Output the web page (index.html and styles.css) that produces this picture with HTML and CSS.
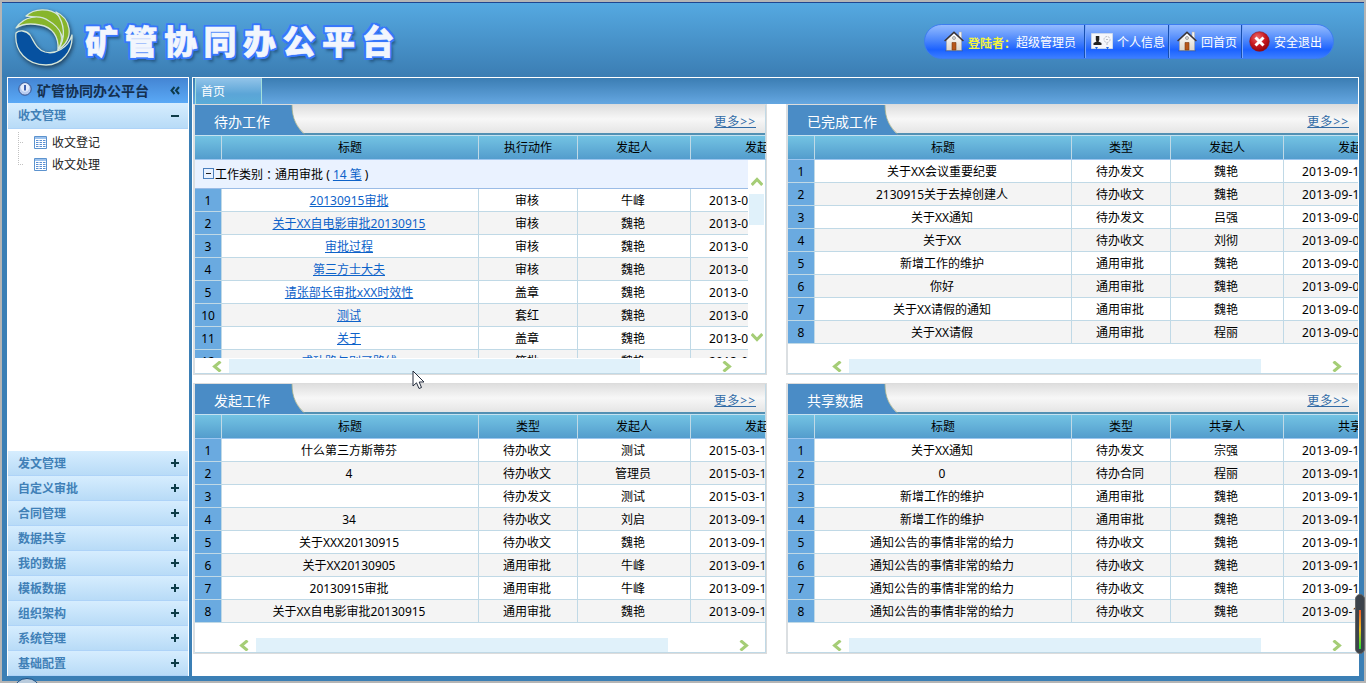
FILE: index.html
```
<!DOCTYPE html>
<html lang="zh-CN">
<head>
<meta charset="utf-8">
<title>矿管协同办公平台</title>
<link rel="stylesheet" href="styles.css">
</head>
<body>
<svg class="defs" width="0" height="0">
  <defs>
    <linearGradient id="wall" x1="0" y1="0" x2="0" y2="1"><stop offset="0" stop-color="#fff"/><stop offset="1" stop-color="#ddd5c8"/></linearGradient>
    <radialGradient id="red" cx=".4" cy=".3" r=".8"><stop offset="0" stop-color="#ee6a6a"/><stop offset=".5" stop-color="#c81820"/><stop offset="1" stop-color="#850008"/></radialGradient>
    <linearGradient id="tabfill" x1="0" y1="0" x2="0" y2="1"><stop offset="0" stop-color="#4a8cc6"/><stop offset="1" stop-color="#4a8cc6"/></linearGradient>
    <symbol id="house" viewBox="0 0 20 21">
      <path d="M15 1h2.500v7H15z" fill="#f6f4ee" stroke="#b5aea2" stroke-width=".5"/>
      <path d="M2.500 9 10 2.200 17.500 9v10.500h-15z" fill="url(#wall)" stroke="#aaa294" stroke-width=".5"/>
      <path d="M.6 10 10 1.200 19.400 10" fill="none" stroke="#3c3434" stroke-width="1.500"/>
      <circle cx="10" cy="7" r="1.500" fill="#ddd" stroke="#8b8b8b" stroke-width=".7"/>
      <path d="M8 11.500h4v7.500H8z" fill="#b85618" stroke="#7a3b12" stroke-width=".6"/>
      <path d="M1 19.800h18" stroke="#44506a" stroke-width=".8" opacity=".6"/>
    </symbol>
    <symbol id="more-l" viewBox="0 0 10 11"><path d="M8.500.5 2.500 5.500l6 5" fill="none" stroke="#a5cd76" stroke-width="3"/></symbol>
    <symbol id="more-r" viewBox="0 0 10 11"><path d="M1.500.5l6 5-6 5" fill="none" stroke="#a5cd76" stroke-width="3"/></symbol>
    <symbol id="sheet" viewBox="0 0 13 13">
      <path d="M.5.5h12v12H.5z" fill="#fff" stroke="#5d93ce"/><path d="M1 1h11v2H1z" fill="#9dc3ee"/>
      <path d="M2 4.500h2.500M5.500 4.500H8M9 4.500h2.500M2 6.500h2.500M5.500 6.500H8M9 6.500h2.500M2 8.500h2.500M5.500 8.500H8M9 8.500h2.500M2 10.500h2.500M5.500 10.500H8M9 10.500h2.500" stroke="#5a8fd2"/>
    </symbol>
    <symbol id="curve" viewBox="0 0 112 30">
      <path d="M0 0h97c0 14 5 23 13 30H0z" fill="url(#tabfill)"/>
      <path d="M97 0c0 14 5 22 12.500 29" fill="none" stroke="#a9b48c" stroke-width=".8"/>
    </symbol>
  </defs>
</svg>
<div class="window">
  <header class="top">
    <svg class="logo" width="64" height="62" viewBox="0 0 64 62">
      <g class="mark" stroke="#d5e6da" stroke-width="1.300" stroke-linejoin="round">
        <path d="M4 25C7 22 14 22 18 27c4 6 6 14 15 17 10 3 23-4 27-17 1 16-10 30-26 30C15 57 2 43 4 25z" fill="#0651a0"/>
        <path d="M14 8C22 0 38 0 46 7c6 6 9 15 6 25C47 20 38 10 14 8z" fill="#87b52b"/>
        <path d="M4 20C12 8 27 6 37 13c12 7 16 17 9 29C47 28 40 19 28 17 18 15 10 16 4 20z" fill="#87b52b"/>
        <path d="M44 4c14 6 20 26 2 38 8-12 7-26-2-38z" fill="#87b52b"/>
      </g>
    </svg>
    <h1 class="brand">矿管协同办公平台</h1>
    <nav class="pill">
      <a class="pill-item user"><svg width="20" height="21"><use href="#house"/></svg><b>登陆者<span class="colon">：</span></b><span>超级管理员</span></a>
      <a class="pill-item info"><svg width="22" height="18" viewBox="0 0 22 18"><path d="M.5.500h21v15H.5z" fill="#f5f7fb" stroke="#cbd8ee"/><path d="M4.800 3h3.500v4l-.8 1.500 3 1.500v2H2.500v-2l3-1.500-.7-1.500z" fill="#222"/><circle cx="16" cy="6.500" r="3" fill="none" stroke="#b7bcc4" stroke-dasharray="2 1"/><path d="M15 6.500h2M16 10v2" stroke="#b7bcc4"/><path d="M4 14h3l-1.500 2.500zM15 14h3l-1.500 2.500z" fill="#2468e0"/></svg><span>个人信息</span></a>
      <a class="pill-item home"><svg width="20" height="21"><use href="#house"/></svg><span>回首页</span></a>
      <a class="pill-item quit"><svg width="21" height="21" viewBox="0 0 21 21"><circle cx="10.500" cy="10.500" r="9.800" fill="url(#red)" stroke="#8a1420" stroke-width=".6"/><path d="M6.500 6.500l8 8M14.500 6.500l-8 8" stroke="#fff" stroke-width="3"/></svg><span>安全退出</span></a>
    </nav>
  </header>
  <div class="main">
    <aside class="side">
      <div class="side-title"><svg width="14" height="14" viewBox="0 0 14 14"><circle cx="7" cy="7" r="6.200" fill="#b9cdf0" stroke="#33508c"/><circle cx="7" cy="5.500" r="4.200" fill="#e4ecfb"/><path d="M7 3v5.500" stroke="#3f62b0" stroke-width="2"/></svg><b>矿管协同办公平台</b><svg class="fold" width="10" height="9" viewBox="0 0 10 9"><path d="M4.500 1 1.500 4.500l3 3.500M9 1 6 4.500 9 8" fill="none" stroke="#0d3a4a" stroke-width="2"/></svg></div>
      <div class="acc open"><b>收文管理</b><i class="sign minus"></i></div>
      <div class="tree">
        <div class="leaf"><svg width="13" height="13"><use href="#sheet"/></svg>收文登记</div>
        <div class="leaf last"><svg width="13" height="13"><use href="#sheet"/></svg>收文处理</div>
      </div>
      <div class="acc"><b>发文管理</b><i class="sign"></i></div>
      <div class="acc"><b>自定义审批</b><i class="sign"></i></div>
      <div class="acc"><b>合同管理</b><i class="sign"></i></div>
      <div class="acc"><b>数据共享</b><i class="sign"></i></div>
      <div class="acc"><b>我的数据</b><i class="sign"></i></div>
      <div class="acc"><b>模板数据</b><i class="sign"></i></div>
      <div class="acc"><b>组织架构</b><i class="sign"></i></div>
      <div class="acc"><b>系统管理</b><i class="sign"></i></div>
      <div class="acc"><b>基础配置</b><i class="sign"></i></div>
    </aside>
    <section class="content">
      <div class="tabs"><div class="tab">首页</div></div>
      <div class="panels">
        <div class="panel">
          <div class="phead"><svg class="curve" width="112" height="30"><use href="#curve"/></svg><span class="ptitle">待办工作</span><a class="more">更多&gt;&gt;</a></div>
          <div class="row thead"><i></i><i>标题</i><i>执行动作</i><i>发起人</i><i>发起</i></div>
          <div class="pbody">
            <div class="rows">
              <div class="group"><span class="box"></span>工作类别<span class="colon">：</span>通用审批 ( <a>14 笔</a> )</div>
              <div class="row"><i>1</i><i><a>20130915审批</a></i><i>审核</i><i>牛峰</i><i>2013-0</i></div>
              <div class="row"><i>2</i><i><a>关于XX自电影审批20130915</a></i><i>审核</i><i>魏艳</i><i>2013-0</i></div>
              <div class="row"><i>3</i><i><a>审批过程</a></i><i>审核</i><i>魏艳</i><i>2013-0</i></div>
              <div class="row"><i>4</i><i><a>第三方士大夫</a></i><i>审核</i><i>魏艳</i><i>2013-0</i></div>
              <div class="row"><i>5</i><i><a>请张部长审批xXX时效性</a></i><i>盖章</i><i>魏艳</i><i>2013-0</i></div>
              <div class="row"><i>10</i><i><a>测试</a></i><i>套红</i><i>魏艳</i><i>2013-0</i></div>
              <div class="row"><i>11</i><i><a>关于</a></i><i>盖章</i><i>魏艳</i><i>2013-0</i></div>
              <div class="row"><i>12</i><i><a>成功路与别了路线</a></i><i>签批</i><i>魏艳</i><i>2013-0</i></div>
            </div>
            <div class="vbar">
              <svg width="12" height="9" viewBox="0 0 12 9"><path d="M.7 8 6 2.500 11.300 8" fill="none" stroke="#a5cd76" stroke-width="3"/></svg>
              <div class="vthumb"></div>
              <svg class="down" width="12" height="9" viewBox="0 0 12 9"><path d="M.7 1 6 6.500 11.300 1" fill="none" stroke="#a5cd76" stroke-width="3"/></svg>
            </div>
          </div>
          <div class="hbar near"><svg width="10" height="11"><use href="#more-l"/></svg><div class="thumb"></div><svg class="r" width="10" height="11"><use href="#more-r"/></svg></div>
        </div>
        <div class="panel">
          <div class="phead"><svg class="curve" width="112" height="30"><use href="#curve"/></svg><span class="ptitle">已完成工作</span><a class="more">更多&gt;&gt;</a></div>
          <div class="row thead"><i></i><i>标题</i><i>类型</i><i>发起人</i><i>发起</i></div>
          <div class="pbody"><div class="rows">
            <div class="row"><i>1</i><i>关于XX会议重要纪要</i><i>待办发文</i><i>魏艳</i><i>2013-09-1</i></div>
            <div class="row"><i>2</i><i>2130915关于去掉创建人</i><i>待办收文</i><i>魏艳</i><i>2013-09-1</i></div>
            <div class="row"><i>3</i><i>关于XX通知</i><i>待办发文</i><i>吕强</i><i>2013-09-0</i></div>
            <div class="row"><i>4</i><i>关于XX</i><i>待办收文</i><i>刘彻</i><i>2013-09-0</i></div>
            <div class="row"><i>5</i><i>新增工作的维护</i><i>通用审批</i><i>魏艳</i><i>2013-09-0</i></div>
            <div class="row"><i>6</i><i>你好</i><i>通用审批</i><i>魏艳</i><i>2013-09-0</i></div>
            <div class="row"><i>7</i><i>关于XX请假的通知</i><i>通用审批</i><i>魏艳</i><i>2013-09-0</i></div>
            <div class="row"><i>8</i><i>关于XX请假</i><i>通用审批</i><i>程丽</i><i>2013-09-0</i></div>
          </div></div>
          <div class="hbar wide"><svg width="10" height="11"><use href="#more-l"/></svg><div class="thumb"></div><svg class="r" width="10" height="11"><use href="#more-r"/></svg></div>
        </div>
        <div class="panel">
          <div class="phead"><svg class="curve" width="112" height="30"><use href="#curve"/></svg><span class="ptitle">发起工作</span><a class="more">更多&gt;&gt;</a></div>
          <div class="row thead"><i></i><i>标题</i><i>类型</i><i>发起人</i><i>发起</i></div>
          <div class="pbody"><div class="rows">
            <div class="row"><i>1</i><i>什么第三方斯蒂芬</i><i>待办收文</i><i>测试</i><i>2015-03-1</i></div>
            <div class="row"><i>2</i><i>4</i><i>待办收文</i><i>管理员</i><i>2015-03-1</i></div>
            <div class="row"><i>3</i><i></i><i>待办发文</i><i>测试</i><i>2015-03-1</i></div>
            <div class="row"><i>4</i><i>34</i><i>待办收文</i><i>刘启</i><i>2013-09-1</i></div>
            <div class="row"><i>5</i><i>关于XXX20130915</i><i>待办收文</i><i>魏艳</i><i>2013-09-1</i></div>
            <div class="row"><i>6</i><i>关于XX20130905</i><i>通用审批</i><i>牛峰</i><i>2013-09-1</i></div>
            <div class="row"><i>7</i><i>20130915审批</i><i>通用审批</i><i>牛峰</i><i>2013-09-1</i></div>
            <div class="row"><i>8</i><i>关于XX自电影审批20130915</i><i>通用审批</i><i>魏艳</i><i>2013-09-1</i></div>
          </div></div>
          <div class="hbar wide"><svg width="10" height="11"><use href="#more-l"/></svg><div class="thumb"></div><svg class="r" width="10" height="11"><use href="#more-r"/></svg></div>
        </div>
        <div class="panel">
          <div class="phead"><svg class="curve" width="112" height="30"><use href="#curve"/></svg><span class="ptitle">共享数据</span><a class="more">更多&gt;&gt;</a></div>
          <div class="row thead"><i></i><i>标题</i><i>类型</i><i>共享人</i><i>共享</i></div>
          <div class="pbody"><div class="rows">
            <div class="row"><i>1</i><i>关于XX通知</i><i>待办发文</i><i>宗强</i><i>2013-09-1</i></div>
            <div class="row"><i>2</i><i>0</i><i>待办合同</i><i>程丽</i><i>2013-09-1</i></div>
            <div class="row"><i>3</i><i>新增工作的维护</i><i>通用审批</i><i>魏艳</i><i>2013-09-1</i></div>
            <div class="row"><i>4</i><i>新增工作的维护</i><i>通用审批</i><i>魏艳</i><i>2013-09-1</i></div>
            <div class="row"><i>5</i><i>通知公告的事情非常的给力</i><i>待办收文</i><i>魏艳</i><i>2013-09-1</i></div>
            <div class="row"><i>6</i><i>通知公告的事情非常的给力</i><i>待办收文</i><i>魏艳</i><i>2013-09-1</i></div>
            <div class="row"><i>7</i><i>通知公告的事情非常的给力</i><i>待办收文</i><i>魏艳</i><i>2013-09-1</i></div>
            <div class="row"><i>8</i><i>通知公告的事情非常的给力</i><i>待办收文</i><i>魏艳</i><i>2013-09-1</i></div>
          </div></div>
          <div class="hbar wide"><svg width="10" height="11"><use href="#more-l"/></svg><div class="thumb"></div><svg class="r" width="10" height="11"><use href="#more-r"/></svg></div>
        </div>
      </div>
    </section>
  </div>
</div>
<svg class="cursor" width="13" height="20" viewBox="0 0 13 20"><path d="M1 1v15l3.500-3.200L7 18.500l2.500-1L7.200 12H12z" fill="#fff" stroke="#222b3c"/></svg>
<svg class="orb" width="26" height="5" viewBox="0 0 26 5"><ellipse cx="13" cy="11" rx="12.500" ry="10.500" fill="#b9cbdc" stroke="#1b4d80"/></svg>
<div class="meter"><i></i></div>
</body>
</html>
```
FILE: styles.css
```
* { box-sizing: border-box; }
body {
  margin: 0;
  width: 1366px;
  height: 683px;
  overflow: hidden;
  position: relative;
  font: 12px/22px "Noto Sans", "Noto Sans CJK SC", sans-serif;
  color: #000;
  background: #b5b5b5;
}
i { font-style: normal; }
svg { display: block; flex: none; }
.defs { position: absolute; }
.colon { font-family: "Noto Sans CJK TC", sans-serif; }
.window {
  height: 683px;
  border: 2px solid #b5b5b5;
  background: #3b7fb5;
  display: flex;
  flex-direction: column;
}
.top {
  height: 75px;
  border-top: 1px solid #1f4690;
  background: linear-gradient(#55a9e1, #3b7db3);
  display: flex;
  align-items: flex-start;
  padding: 4px 30px 0 10px;
}
.logo { margin-top: 1px; overflow: visible; }
.mark { filter: drop-shadow(1px 2px 2px #1d3f5d); }
.brand {
  margin: 12px 0 0 9px;
  font: 900 33px/42px "Noto Sans CJK SC", sans-serif;
  letter-spacing: 6.500px;
  color: #f2f6fd;
  -webkit-text-stroke: .6px #f2f6fd;
  text-shadow: 2px 0 #3777fb, -2px 0 #3777fb, 0 2px #3777fb, 0 -2px #3777fb, 2px 2px #3777fb, -2px 2px #3777fb, 2px -2px #3777fb, -2px -2px #3777fb, 3px 4px 3px #245783;
  white-space: nowrap;
}
.pill {
  margin: 17px 0 0 auto;
  width: 410px;
  height: 35px;
  border-radius: 18px;
  border: 1px solid #3d7df0;
  background: linear-gradient(#94bbff, #4e88fb 45%, #1c62ff 75%, #3b7eff);
  display: flex;
  color: #fff;
  overflow: hidden;
}
.pill-item {
  display: flex;
  align-items: center;
  border-right: 1px solid #174fae;
  border-left: 1px solid #76a5ff;
  white-space: nowrap;
}
.pill-item b { color: #f4f43c; padding-top: 3px; }
.pill-item > span { padding-top: 3px; }
.user { width: 160px; padding-left: 19px; border-left: 0; }
.user svg, .home svg { margin-right: 4px; }
.info { width: 84px; padding-left: 5px; }
.info svg { margin-right: 4px; }
.home { width: 73px; padding-left: 7px; }
.quit { flex: 1; padding-left: 6px; border-right: 0; }
.quit svg { margin-right: 4px; }

.main { height: 599px; margin: 0 5px; display: flex; gap: 3px; }
.side {
  width: 182px;
  border: 1px solid #fff;
  border-bottom-width: 0;
  background: #fff;
  display: flex;
  flex-direction: column;
}
.side-title {
  height: 25px;
  background: linear-gradient(#4485d3, #5aa9f6);
  display: flex;
  align-items: center;
  padding: 0 8px 1px 10px;
  font-size: 14px;
  color: #15304f;
}
.side-title > svg:first-child { margin: 0 5px 3px 0; }
.side-title b { font-weight: 600; padding-top: 1px; }
.side-title .fold { margin-left: auto; }
.acc {
  height: 25px;
  border-bottom: 1px solid #aed3f8;
  background: linear-gradient(#d6edfe, #b8dbf7);
  display: flex;
  align-items: center;
  justify-content: space-between;
  padding: 0 9px 0 10px;
  color: #4080b7;
}
.acc b { padding-top: 2px; }
.acc.open { height: 26px; }
.acc.open b { padding-top: 1px; }
.sign {
  width: 8px;
  height: 8px;
  background: linear-gradient(#0e3c48, #0e3c48) 0 3px / 8px 2px no-repeat, linear-gradient(#0e3c48, #0e3c48) 3px 0 / 2px 8px no-repeat;
}
.sign.minus { background: linear-gradient(#0e3c48, #0e3c48) 0 3px / 8px 2px no-repeat; }
.tree { flex: 1; padding: 3px 0 0 10px; }
.leaf {
  height: 22px;
  display: flex;
  align-items: center;
  gap: 5px;
  color: #222;
  padding-left: 16px;
  background: repeating-linear-gradient(90deg, #c2c2c2 0 1px, transparent 1px 2px) 0 10px / 5px 1px no-repeat, repeating-linear-gradient(#c2c2c2 0 1px, transparent 1px 2px) 0 0 / 1px 100% no-repeat;
}
.leaf.last { background-size: 5px 1px, 1px 10px; }
.leaf svg { margin-bottom: 1px; }

.content {
  flex: 1;
  min-width: 0;
  border: 1px solid #fff;
  border-bottom: 0;
  background: #fff;
}
.tabs { height: 26px; background: linear-gradient(#3b7db3, #65a7e1); padding: 0 2px; }
.tab {
  width: 67px;
  height: 26px;
  border: 1px solid #a3e0dc;
  border-top-color: #8fc0e6;
  border-bottom: 0;
  background: linear-gradient(#8fc2e8, #5ba5d7 60%, #5aacd8);
  color: #fff;
  padding-left: 5px;
  line-height: 25px;
}
.panels {
  display: grid;
  grid-template-columns: 574px 574px;
  column-gap: 19px;
  row-gap: 8px;
  overflow: hidden;
}
.panel {
  height: 271px;
  border: 1px solid #dcdcdc;
  border-left: 2px solid #dbdfe2;
  box-shadow: inset -1px -1px #c0d9e6;
  padding: 0 1px 1px 0;
  overflow: hidden;
  display: flex;
  flex-direction: column;
}
.phead {
  height: 30px;
  flex: none;
  display: flex;
  justify-content: space-between;
  background: linear-gradient(#dedede, #f7f7f7 50%, #e5e5e5);
  border-bottom: 2px solid #5290b3;
  position: relative;
}
.curve { position: absolute; left: 0; top: 0; }
.ptitle { position: relative; font-size: 14px; line-height: 34px; color: #fff; padding-left: 19px; }
.more { color: #316ba6; text-decoration: underline; line-height: 34px; padding-right: 9px; letter-spacing: 1px; }
.row {
  display: grid;
  grid-template-columns: 27px 257px 99px 113px 75px;
  height: 23px;
  line-height: 24px;
}
.row > i {
  border-right: 1px solid #c0d9e6;
  border-bottom: 1px solid #c0d9e6;
  text-align: center;
  white-space: nowrap;
  overflow: hidden;
  padding-right: 2px;
}
.row > i:first-child { background: #6aaae0; padding-right: 0; }
.row > i:last-child { text-align: left; padding: 0 0 0 18px; letter-spacing: .2px; border-right: 0; }
.rows .row:nth-child(even) { background: #f4f4f4; }
.rows .group ~ .row:nth-child(even) { background: #fff; }
.rows .group ~ .row:nth-child(odd) { background: #f4f4f4; }
.row.thead { height: 25px; flex: none; line-height: 23px; background: linear-gradient(#73c3e3, #529bcc); border-top: 1px solid #c5e2f0; }
.row.thead > i { background: none; border-bottom-color: #9dc6ef; padding-right: 0; }
.row.thead > i:last-child { padding-left: 54px; letter-spacing: 0; }
.pbody { height: 199px; flex: none; display: flex; overflow: hidden; }
.rows { flex: 1; min-width: 0; overflow: hidden; height: 198px; }
.pbody .rows a { color: #0d62c9; text-decoration: underline; }
.group {
  height: 29px;
  background: #eaf2ff;
  border-bottom: 1px solid #9bbce6;
  display: flex;
  align-items: center;
  padding: 2px 0 0 8px;
  white-space: pre;
}
.box {
  width: 11px;
  height: 11px;
  margin: 0 1px 4px 0;
  border: 1px solid #4b7fbd;
  background: linear-gradient(#222, #222) center / 5px 1px no-repeat;
}
.vbar { width: 17px; display: flex; flex-direction: column; padding: 17px 0 17px 1px; }
.vbar svg { margin-left: 2px; }
.vthumb { width: 15px; height: 31px; margin-top: 8px; background: #e0f1fa; }
.vbar .down { margin-top: auto; }
.hbar { height: 14px; display: flex; align-items: center; }
.hbar .thumb { height: 14px; width: 412px; margin-left: 7px; background: #e0f1fa; }
.near { padding-left: 17px; }
.near .thumb { width: 411px; }
.near .r { margin-left: 82px; }
.wide { padding-left: 44px; }
.wide .r { margin-left: 71px; }

.cursor { position: absolute; left: 412px; top: 370px; }
.orb { position: absolute; left: 14px; top: 678px; }
.meter {
  position: absolute;
  left: 1355px;
  top: 594px;
  width: 10px;
  height: 60px;
  border-radius: 5px;
  border: 1px solid #666;
  background: #3c434b;
}
.meter i { position: absolute; left: 3px; top: 15px; width: 2px; height: 39px; background: linear-gradient(#f05a28, #f0c020 50%, #20e030); }
```
